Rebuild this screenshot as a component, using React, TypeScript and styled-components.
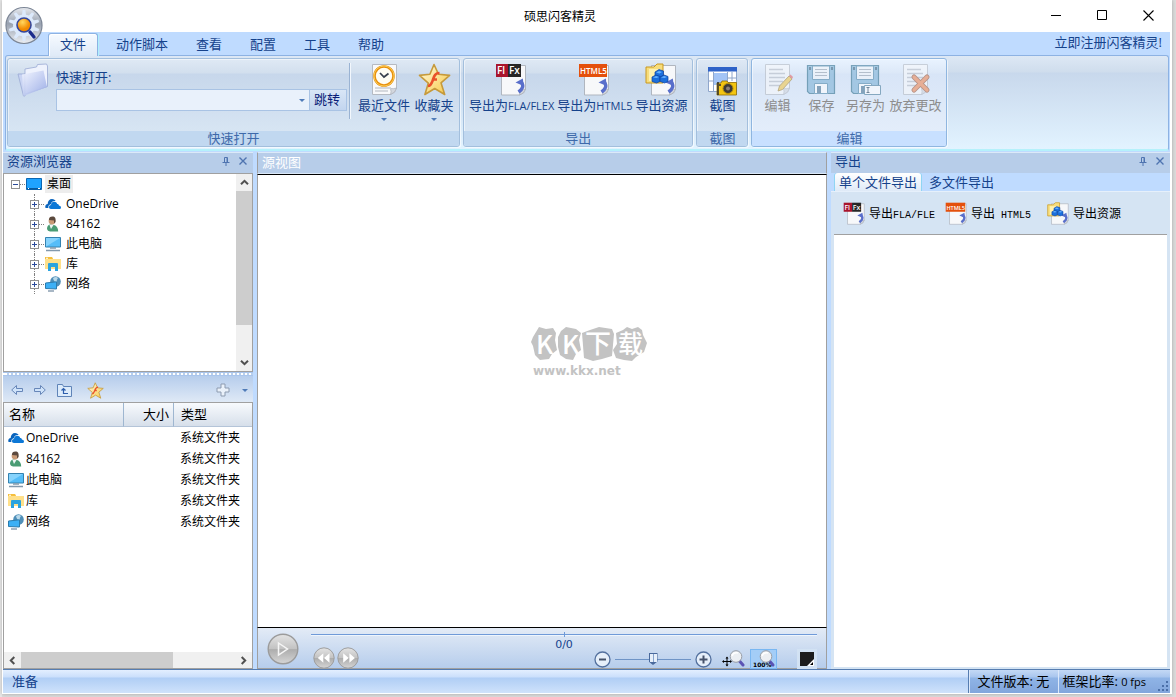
import React, { useState } from "react";
import styled, { createGlobalStyle, css } from "styled-components";

const navy = "#15428b";
const edge = "#a0a0a0";
const frame = "#bfdbff";

const GlobalStyle = createGlobalStyle`
  * { box-sizing: border-box; }
  body { margin: 0; background: #d2d2d2; }
  body, button, input, table {
    font-family: "Open Sans", "Noto Sans CJK SC", sans-serif;
    font-size: 13px;
    line-height: 16px;
  }
  button { border: 0; padding: 0; background: none; color: inherit; }
  svg { display: block; flex: none; }
`;

/* ---------- window frame ---------- */

const Page = styled.div`
  display: flex;
  min-height: 100vh;
  padding: 0 4px 3px 2px;
  background: linear-gradient(90deg, #e8e8e8 0 2px, #dcdcdc 2px);
`;

const Window = styled.div`
  position: relative;
  flex: 1;
  min-width: 0;
  display: flex;
  flex-direction: column;
  border: 1px solid #fff;
  border-width: 0 2px 1px 1px;
  background: ${frame};
  box-shadow: 0 0 4px rgba(0, 0, 0, 0.25);
`;

const TitleBar = styled.header`
  display: flex;
  height: 32px;
  margin-right: -1px;
  background: #fff;
`;

const Title = styled.h1`
  flex: 1;
  margin: 0;
  padding-left: 84px;
  font-size: 12px;
  font-weight: 400;
  line-height: 34px;
  text-align: center;
`;

const CaptionButton = styled.button`
  width: 46px;
  height: 30px;
  display: grid;
  place-items: center;
`;

const AppButton = styled.button`
  position: absolute;
  left: 2px;
  top: 6px;
  z-index: 2;
`;

const Watermark = styled.div`
  position: absolute;
  inset: 0;
  z-index: 1;
  display: grid;
  place-items: center;
  padding: 14px 0 0 6px;
  pointer-events: none;
`;

/* ---------- ribbon ---------- */

const TabStrip = styled.nav`
  display: flex;
  align-items: flex-end;
  gap: 4px;
  height: 23px;
  padding: 0 8px 0 45px;
`;

const Tab = styled.button<{ $active?: boolean }>`
  position: relative;
  height: 22px;
  padding: 0 11px 1px;
  border: 1px solid transparent;
  color: ${navy};
  ${(p) =>
    p.$active &&
    css`
      height: 23px;
      margin: 0 2px -1px 0;
      padding-bottom: 2px;
      border-color: #8db2e3;
      border-bottom: 0;
      border-radius: 3px 3px 0 0;
      background: linear-gradient(#f6faff, #dfeaf7);
      box-shadow: inset 1px 1px 0 #fff, 1px 0 0 #aef0fb;
    `}
`;

const RegisterLink = styled.a`
  align-self: flex-start;
  margin-left: auto;
  padding-top: 2px;
  color: ${navy};
  text-decoration: none;
`;

const RibbonBody = styled.div`
  display: flex;
  gap: 3px;
  margin: 0 1px 1px 2px;
  padding: 2px 1px;
  border: 1px solid #8db2e3;
  border-bottom: 2px solid #b5f1fb;
  border-radius: 3px;
  background: linear-gradient(#dde8f5 0, #cfdded 16px, #c8d8ec 17px, #e2f3ff 100%);
`;

const Group = styled.section<{ $hot?: boolean }>`
  display: flex;
  flex-direction: column;
  height: 89px;
  border: 1px solid ${(p) => (p.$hot ? "#8fb6e0" : "#a3bfdd")};
  border-radius: 3px;
  overflow: hidden;
  box-shadow: inset 1px 1px 0 rgba(255, 255, 255, 0.5), 1px 1px 0 rgba(255, 255, 255, 0.6);
  background: ${(p) =>
    p.$hot
      ? "linear-gradient(#e9f3ff 0, #dce8f8 14px, #d8e5f7 15px, #e3edfa 72px)"
      : "linear-gradient(#dfe9f5 0, #d2dfee 14px, #c7d7eb 15px, #d7e5f3 72px)"};
`;

const GroupBody = styled.div<{ $tight?: boolean }>`
  flex: 1;
  display: flex;
  gap: ${(p) => (p.$tight ? 3 : 4)}px;
  padding: 4px 5px 0;
`;

const GroupTitle = styled.h2<{ $hot?: boolean }>`
  margin: 0;
  height: 15px;
  font-size: 13px;
  font-weight: 400;
  line-height: 14px;
  text-align: center;
  color: #3e6aaa;
  background: ${(p) => (p.$hot ? "#c8e0ff" : "#c1d8f0")};
`;

const RibbonButton = styled.button`
  display: flex;
  flex-direction: column;
  align-items: center;
  min-width: 40px;
  height: 66px;
  color: ${navy};
  white-space: nowrap;
  &:disabled { color: #8d8d8d; }
  &:disabled svg { opacity: 0.6; }
`;

const RibbonLabel = styled.span`
  margin: 1px 0 5px;
`;

const Small = styled.span`
  font-size: 11px;
`;

const Caret = styled.i`
  width: 0;
  border: 3px solid transparent;
  border-top-color: #4f7bb8;
  border-bottom: 0;
`;

const QuickOpen = styled.div`
  width: 294px;
  height: 56px;
  margin: 0 4px 0 3px;
  padding-top: 6px;
  border-right: 1px solid #9ab3d3;
  box-shadow: 1px 0 0 #f2f7fd;
  color: ${navy};
  & > label { display: block; margin-bottom: 4px; }
`;

const QuickRow = styled.div`
  display: flex;
  height: 22px;
  margin-right: 2px;
  border: 1px solid #a9c3e4;
  background: #e9f1fb;
  & > input { flex: 1; min-width: 0; border: 0; background: none; outline: none; }
`;

const ComboArrow = styled.button`
  width: 14px;
  display: grid;
  place-items: center;
`;

const GoButton = styled.button`
  width: 37px;
  padding: 0 2px 2px 0;
  border-left: 1px solid #a9c3e4;
  color: #0a1d78;
  background: linear-gradient(#d9e6f6, #c2d5ef);
`;

const FolderSlot = styled.div`
  padding-left: 4px;
`;

/* ---------- docked panels ---------- */

const Workspace = styled.main`
  flex: 1;
  display: grid;
  grid-template-columns: 250px minmax(0, 1fr) 339px;
  gap: 4px;
`;

const Panel = styled.section`
  display: flex;
  flex-direction: column;
  min-width: 0;
`;

const PanelHeader = styled.div<{ $pale?: boolean }>`
  display: flex;
  align-items: center;
  gap: 9px;
  height: 21px;
  padding: 0 6px 4px 4px;
  border-top: 1px solid #dce9f8;
  background: #b7cde9;
  color: ${(p) => (p.$pale ? "#fff" : navy)};
  & > h2 { flex: 1; margin: 0; font-size: 13px; font-weight: 400; }
  ${(p) =>
    p.$pale &&
    css`
      height: 22px;
      padding-bottom: 3px;
      border: 1px solid ${edge};
      border-top-color: #dce9f8;
      border-bottom-color: #dce9f8;
    `}
`;

const TreeBox = styled.div`
  display: flex;
  height: 199px;
  border: 1px solid ${edge};
  background: #fff;
`;

const Tree = styled.ul`
  flex: 1;
  margin: 0;
  padding: 0 0 0 7px;
  list-style: none;
  font-size: 12px;
  & ul { margin: 0; padding: 0 0 0 19px; list-style: none; }
  & ul > li { position: relative; }
  & ul > li::before {
    content: "";
    position: absolute;
    left: 4px;
    top: 0;
    bottom: 0;
    border-left: 1px dotted #808080;
  }
`;

const TreeRow = styled.div`
  position: relative;
  display: flex;
  align-items: center;
  height: 20px;
`;

const Expander = styled.button`
  width: 9px;
  height: 9px;
  border: 1px solid #919191;
  background: #fff;
  display: grid;
  place-items: center;
`;

const Twig = styled.i`
  width: 5px;
  margin-right: 1px;
  border-top: 1px dotted #808080;
`;

const TreeLabel = styled.span<{ $selected?: boolean }>`
  margin-left: 3px;
  padding: 1px 2px;
  background: ${(p) => (p.$selected ? "#ededed" : "none")};
`;

const Bar = styled.div<{ $vertical?: boolean }>`
  display: flex;
  flex: none;
  flex-direction: ${(p) => (p.$vertical ? "column" : "row")};
  ${(p) => (p.$vertical ? "width: 16px;" : "height: 16px;")}
  background: #f0f0f0;
  & > button { flex: 0 0 17px; display: grid; place-items: center; }
  & > div { flex: 1; }
`;

const Thumb = styled.div<{ $vertical?: boolean; $size: number }>`
  background: #cdcdcd;
  ${(p) => (p.$vertical ? `height: ${p.$size}%;` : `width: ${p.$size}%; height: 100%;`)}
`;

const Splitter = styled.div`
  height: 4px;
  background: repeating-linear-gradient(90deg, #fff 0 2px, #b9cfec 2px 4px) 2px 1px / auto 2px repeat-x #a9c5ec;
`;

const ListTools = styled.div`
  display: flex;
  align-items: center;
  height: 26px;
  padding: 2px 5px 0 8px;
  gap: 12px;
  background: linear-gradient(#b6cdec, #dfe9f6);
`;

const NavTools = styled.div`
  flex: 1;
  display: flex;
  align-items: center;
  gap: 11px;
`;

const StarButton = styled.button`
  padding-left: 4px;
`;

const ListBox = styled.div`
  flex: 1;
  display: flex;
  flex-direction: column;
  justify-content: space-between;
  border: 1px solid ${edge};
  background: #fff;
`;

const FileTable = styled.table`
  width: 100%;
  table-layout: fixed;
  border-collapse: separate;
  border-spacing: 0;
  font-size: 12px;
  th {
    height: 24px;
    padding: 0 5px 2px;
    border-right: 1px solid #9eb6d0;
    border-bottom: 1px solid #b4c4d8;
    background: linear-gradient(#f8fafd, #d6dfea);
    font-size: 13px;
    font-weight: 400;
    text-align: left;
  }
  th:nth-child(1) { width: 120px; }
  th:nth-child(2) { width: 50px; text-align: right; padding-right: 4px; }
  th:nth-child(3) { padding-left: 7px; border-right: 0; }
  td { height: 21px; padding: 0 6px 0 4px; }
  td:nth-child(3) { padding-left: 6px; }
`;

const FileName = styled.span`
  display: flex;
  align-items: center;
  gap: 2px;
`;

const Stage = styled.div`
  flex: 1;
  min-height: 400px;
  border: 1px solid #000;
  border-left-color: ${edge};
  border-right-color: ${edge};
  background: #fff;
`;

/* ---------- player ---------- */

const Player = styled.div`
  display: flex;
  align-items: flex-start;
  gap: 12px;
  height: 41px;
  padding: 5px 9px 0;
  border: 1px solid ${edge};
  border-top: 0;
  background: linear-gradient(#e3ebf6, #b6cdec);
`;

const Transport = styled.div`
  flex: 1;
  min-width: 0;
  padding-top: 1px;
`;

const Timeline = styled.div`
  height: 2px;
  border-top: 1px solid #6f9ad8;
  background: #eef5fd;
`;

const Deck = styled.div`
  display: grid;
  grid-template-columns: 1fr auto 1fr;
  height: 32px;
`;

const Seek = styled.div`
  display: flex;
  align-items: flex-end;
  gap: 2px;
  padding-left: 2px;
`;

const FrameCount = styled.output`
  position: relative;
  font-family: "DejaVu Sans", sans-serif;
  font-size: 11px;
  line-height: 18px;
  color: ${navy};
  &::before {
    content: "";
    position: absolute;
    left: 50%;
    top: -4px;
    height: 5px;
    border-left: 1px solid #6f9ad8;
  }
`;

const ViewTools = styled.div`
  display: flex;
  align-items: center;
  justify-content: flex-end;
  padding-top: 13px;
`;

const ZoomRange = styled.input`
  appearance: none;
  width: 76px;
  height: 16px;
  margin: 0 4px;
  background: linear-gradient(#6f94c6, #6f94c6) center / 100% 1px no-repeat;
  &::-webkit-slider-thumb {
    appearance: none;
    width: 9px;
    height: 12px;
    clip-path: polygon(0 0, 100% 0, 100% 70%, 50% 100%, 0 70%);
    background: linear-gradient(90deg, #e6effa 40%, #86a2cc 40% 60%, #e6effa 60%) center 1px / 7px 8px no-repeat #49699c;
  }
`;

const ToolPair = styled.div`
  display: flex;
  gap: 3px;
  margin: 0 20px 0 8px;
`;

const ToolButton = styled.button<{ $on?: boolean }>`
  display: grid;
  place-items: center;
  width: 27px;
  height: 20px;
  border: 1px solid ${(p) => (p.$on ? "#79b7f2" : "transparent")};
  background: ${(p) => (p.$on ? "#a3cdf7" : "none")};
`;

const Swatch = styled.button`
  display: grid;
  place-items: center;
  width: 20px;
  height: 20px;
  background: #d2e2f3;
`;

/* ---------- export panel ---------- */

const ExportTabs = styled.div`
  display: flex;
  align-items: flex-end;
  height: 19px;
  gap: 4px;
  padding-left: 4px;
  border-bottom: 1px solid #e6f0fb;
`;

const ExportTab = styled.button<{ $active?: boolean }>`
  height: 18px;
  padding: 0 4px;
  border-radius: 3px 3px 0 0;
  color: ${navy};
  ${(p) =>
    p.$active &&
    css`
      background: linear-gradient(#fff, #dfeaf7);
      box-shadow: -1px 0 0 #8fd5f3, 1px 0 0 #8fd5f3;
    `}
`;

const ExportBody = styled.div`
  flex: 1;
  display: flex;
  flex-direction: column;
  padding: 0 3px 2px;
  background: #d5e4f3;
`;

const ExportTools = styled.div`
  display: grid;
  grid-template-columns: 102px 102px auto;
  justify-content: start;
  align-items: center;
  height: 42px;
  padding: 1px 0 0 9px;
`;

const ExportButton = styled.button`
  display: flex;
  align-items: center;
  gap: 3px;
  font-size: 12px;
  white-space: nowrap;
`;

const Mono = styled.span`
  font-family: "Liberation Mono", monospace;
  font-size: 10px;
  line-height: 12px;
`;

const ExportList = styled.div`
  flex: 1;
  border-top: 1px solid ${edge};
  background: #fff;
`;

/* ---------- status bar ---------- */

const StatusBar = styled.footer`
  display: flex;
  height: 24px;
  border-top: 1px solid #567db1;
  color: ${navy};
  line-height: 22px;
  background: linear-gradient(#e3efff 0, #cbdffb 7px, #b0cef5 8px, #cfe2fb 100%);
`;

const Ready = styled.span`
  flex: 1;
  padding-left: 9px;
`;

const StatusInfo = styled.div`
  display: flex;
  border-left: 1px solid #567db1;
  color: #000;
  background: linear-gradient(#c4d9f5 0, #a9c6ee 7px, #8fb4e6 8px, #82a6dc 100%);
`;

const StatusCell = styled.span`
  padding: 0 9px 0 8px;
  border-left: 1px solid #dbe8fa;
  & + & { padding: 0 10px 0 3px; }
`;

/* ---------- icons ---------- */

const LogoIcon = () => (
  <svg width="38" height="40" viewBox="0 0 38 40">
    <defs>
      <linearGradient id="orb" x1="0" y1="0" x2="0" y2="1">
        <stop offset="0" stopColor="#e6e9ee" />
        <stop offset=".45" stopColor="#98a1b0" />
        <stop offset="1" stopColor="#eceff3" />
      </linearGradient>
      <radialGradient id="sun" cx=".4" cy=".3">
        <stop offset="0" stopColor="#ffd860" />
        <stop offset="1" stopColor="#f28a00" />
      </radialGradient>
    </defs>
    <circle cx="19" cy="19.500" r="18" fill="url(#orb)" stroke="#7c8696" strokeWidth="1.200" />
    <g fill="#dce9fb">
      {[0, 36, 72, 108, 144, 180, 216, 252, 288, 324].map((a) => (
        <path key={a} d="M16.800 11 17.600 4h2.800l.8 7z" transform={`rotate(${a} 19 19.500)`} />
      ))}
    </g>
    <circle cx="19" cy="19.500" r="11" fill="#dce9fb" />
    <circle cx="19" cy="19" r="7" fill="url(#sun)" stroke="#34459b" strokeWidth="1.600" />
    <path d="m25 26 4 5" stroke="#1c2c8c" strokeWidth="3.400" strokeLinecap="round" />
  </svg>
);

const BigFolderIcon = () => (
  <svg width="32" height="34" viewBox="0 0 32 34">
    <defs>
      <linearGradient id="fold" x1="0" y1="0" x2="1" y2="1">
        <stop offset="0" stopColor="#f3f6ff" />
        <stop offset="1" stopColor="#93a6e4" />
      </linearGradient>
    </defs>
    <path d="M1 11h7v22H6.500z" fill="#c9d4f3" stroke="#9aa9d4" strokeWidth=".8" />
    <path d="M8 6 19.500 4 20.500 1.500l9-.5 1 2v20.500L8 31z" fill="#eef2fd" stroke="#9aa9d4" strokeWidth=".8" />
    <path d="m5 11.500 21.500-4L30 24 6.500 33z" fill="url(#fold)" fillOpacity=".9" />
  </svg>
);

const Sheet = () => (
  <g>
    <path d="M4.500 1.500h24V25q-1 5-6 6.500h-18z" fill="#f8f9fb" stroke="#b5bac2" />
    <path d="M28.500 25q-3 1-6 .5 1 3 0 6 5-1.500 6-6.500z" fill="#d3d7de" stroke="#a2a8b2" strokeWidth=".6" />
  </g>
);

const RecentIcon = () => (
  <svg width="32" height="33" viewBox="0 0 32 33">
    <Sheet />
    <path d="M7 25h16M7 28h13" stroke="#c9cdd3" strokeWidth="1.500" />
    <circle cx="16" cy="13" r="9.500" fill="#fffdf4" stroke="#e88f0c" strokeWidth="2.600" />
    <circle cx="16" cy="13" r="10" fill="none" stroke="#fbd25d" strokeWidth=".9" />
    <path d="m12 10 4 4 4.500-3.500" fill="none" stroke="#38404e" strokeWidth="1.700" />
  </svg>
);

const StarIcon = ({ size = 33 }: { size?: number }) => (
  <svg width={size} height={size} viewBox="0 0 33 33">
    <defs>
      <linearGradient id="gold" x1="0" y1="0" x2="1" y2="1">
        <stop offset="0" stopColor="#fffbe0" />
        <stop offset="1" stopColor="#f8c845" />
      </linearGradient>
    </defs>
    <path
      d="m16 1.500 4.600 9.800 11 1.100-8.600 7.400 3.700 11.700-10-6-9.800 6 3.400-11.300L1.500 12.400l10.400-1.100z"
      fill="url(#gold)"
      stroke="#c69a3c"
      strokeWidth="1.600"
      strokeLinejoin="round"
    />
    <path d="M21.500 10c-5 0-5.500 4-7 8S12 23 10 23m4-6.500h5" fill="none" stroke="#e9512a" strokeWidth="2.600" />
  </svg>
);

const ExportSheet = ({ children, size }: { children: React.ReactNode; size: number }) => (
  <svg width={size} height={size} viewBox="0 0 33 33">
    <path d="M6.500 2.500h24V26q-1 5-6 6h-18z" fill="#f7f8fa" stroke="#b0b6bf" />
    <path d="M30.500 26q-3 1-6 .4 1 3 0 5.600 5-1.500 6-6z" fill="#d3d7de" stroke="#a2a8b2" strokeWidth=".6" />
    <path d="M23.500 29q7-5 2.600-10" fill="none" stroke="#596fcb" strokeWidth="3.400" />
    <path d="m20.500 19.500 7.300-4 1 7.500z" fill="#596fcb" />
    {children}
  </svg>
);

const IconText = styled.text`
  font-family: "Open Sans", sans-serif;
  font-weight: 600;
  fill: #fff;
`;

const FlaIcon = ({ size = 33 }: { size?: number }) => (
  <ExportSheet size={size}>
    <path d="M1 1h12v13H1z" fill="#a8142c" />
    <path d="M13 1h13v13H13z" fill="#262626" />
    <IconText x="2" y="11" fontSize="10">Fl</IconText>
    <IconText x="14" y="11" fontSize="10">Fx</IconText>
  </ExportSheet>
);

const HtmlIcon = ({ size = 33 }: { size?: number }) => (
  <ExportSheet size={size}>
    <path d="M1 1h28v13H1z" fill="#e4500c" />
    <IconText x="2" y="11" fontSize="8">HTML5</IconText>
  </ExportSheet>
);

const AssetIcon = ({ size = 33 }: { size?: number }) => (
  <ExportSheet size={size}>
    <path d="M1 4h8l3-3h6v19H1z" fill="#f7dd7c" stroke="#c9981f" />
    <path d="M4 6h12v12H4z" fill="#fff1b0" />
    <g fill="#1c6fdc" stroke="#0b3f9c" strokeWidth=".7">
      <path d="m10 9 4-2.500L18.500 8v4.500L15 14.500 10 13z" />
      <path d="m7 14 4-2 4 1.500v5L11.500 20 7 18.500z" />
      <path d="m15 14 4-2 4 1.500v5L19.500 20 15 18.500z" />
    </g>
    <path d="m11 9.500 3-1.500 3 1-2.500 1.500zm-3 5 3-1.500 3 1-2.500 1zm8 0 3-1.500 3 1-2.500 1z" fill="#66b2ff" />
  </ExportSheet>
);

const CaptureIcon = () => (
  <svg width="33" height="33" viewBox="0 0 33 33">
    <path d="M2.500 4.500h28v24h-28z" fill="#fff" stroke="#8fa6cb" />
    <path d="M2 4h29v4.500H2z" fill="#2e62c8" />
    <path d="M8 10h13v12H8z" fill="#a3c4f6" />
    <path d="M7.500 9v19M21.500 9v13M26 9v9M3 18h4.500M21.500 15h9" stroke="#8fa6cb" />
    <path d="M11 20h4l1-2h5l1 1.500h8.500V32H11z" fill="#f3c511" stroke="#8b6a08" strokeWidth=".8" />
    <circle cx="22" cy="25.500" r="5" fill="#3d3a38" stroke="#b68f0b" />
    <circle cx="22" cy="25.500" r="2" fill="#8a8079" />
    <path d="M12 19v13M13 22h2" stroke="#2b2b2b" strokeWidth="1.500" />
  </svg>
);

const Lines = () => <path d="M8 6.500h14M8 10.500h16M8 14.500h16M8 18.500h14M8 22.500h14" stroke="#b9bec6" strokeWidth="1.400" />;

const EditIcon = () => (
  <svg width="32" height="33" viewBox="0 0 32 33">
    <Sheet />
    <Lines />
    <path d="m17 28 1.500-5L28 13l3 3-9.500 10.500z" fill="#f3c94e" stroke="#97772c" strokeWidth=".8" />
    <path d="m28 13 1.500-1.500 2.500 2.500-1 2z" fill="#e46a6a" />
  </svg>
);

const Floppy = () => (
  <g>
    <path d="M2.500 2.500h27v28h-25l-2-2z" fill="#7fb3d6" stroke="#32718f" strokeWidth="1.200" />
    <path d="M7.500 3h17v13.500h-17z" fill="#f5f8fb" stroke="#4d86a8" />
    <path d="M10 6.500h12M10 9.500h12M10 12.500h12" stroke="#9aa5b0" />
    <path d="M9.500 20.500h13v10h-13z" fill="#fff" stroke="#4d86a8" />
    <path d="M12 23h4v7h-4z" fill="#4b7594" />
    <path d="M4 4h2v3H4zm22 0h2v3h-2z" fill="#37617c" />
  </g>
);

const SaveIcon = () => (
  <svg width="32" height="33" viewBox="0 0 32 33">
    <Floppy />
  </svg>
);

const SaveAsIcon = () => (
  <svg width="32" height="33" viewBox="0 0 32 33">
    <Floppy />
    <path d="M15.500 22.500h16v9h-16z" fill="#fff" stroke="#4d7f9c" />
    <path d="M17.500 24.500h3m-3 5h3m-1.500-5v5" stroke="#2f4a5e" />
  </svg>
);

const DiscardIcon = () => (
  <svg width="32" height="33" viewBox="0 0 32 33">
    <Sheet />
    <Lines />
    <path d="m15 14 13 13M28 14 15 27" stroke="#9c5a3c" strokeWidth="5" strokeLinecap="round" />
    <path d="m15 14 13 13M28 14 15 27" stroke="#f08a56" strokeWidth="3.200" strokeLinecap="round" />
  </svg>
);

const DesktopIcon = () => (
  <svg width="16" height="16" viewBox="0 0 16 16">
    <path d="M.5 2.500h15v11H.5z" fill="#1fa3ff" stroke="#0b67b3" />
    <path d="M1 12h14v1.500H1z" fill="#085a9e" />
    <path d="M2 12.500h1m9 0h2" stroke="#fff" />
  </svg>
);

const CloudIcon = () => (
  <svg width="16" height="16" viewBox="0 0 16 16">
    <path d="M.3 11.500c-.3-2 .8-3.300 2.400-3.400C2.700 5 4.500 3 7 3c2 0 3 1 3.600 2-2.600-.3-4.500 1-4.800 3.200C3.900 8.400 3 10 3.400 12H2C1 12 .4 12 .3 11.500z" fill="#0a64bd" />
    <path d="M6 13c-1.400 0-2-1-2-2 0-1.200.8-2 2-2 .1-2 1.400-3.200 3.200-3.200 1.500 0 2.600.9 3 2.200 1 0 1.800.6 1.800 1.700 1.200 0 2 .7 2 1.700S15.200 13 14.300 13z" fill="#0d78d6" />
  </svg>
);

const UserIcon = () => (
  <svg width="16" height="16" viewBox="0 0 16 16">
    <path d="M2 13q0-4 3-4.500l4 .5q4 1 4.200 6.500H5Q2.500 15 2 13z" fill="#4a9c74" />
    <path d="m4.500 9 1.500 4L8.500 9z" fill="#eef4f4" />
    <circle cx="7" cy="5" r="3.400" fill="#c99a76" />
    <path d="M4 4C4 1.500 5 .5 7.500.5S11 2 10.500 6L9 7.500V4.500z" fill="#5b493e" />
  </svg>
);

const ComputerIcon = () => (
  <svg width="16" height="16" viewBox="0 0 16 16">
    <path d="M.5 1.500h15v9.500H.5z" fill="#55bdf8" stroke="#3482b0" />
    <path d="M1 2h14L1 10.500z" fill="#86d3fc" />
    <path d="M5 12h6M1 14.500h14" stroke="#8399ac" strokeWidth="1.400" />
  </svg>
);

const LibraryIcon = () => (
  <svg width="16" height="16" viewBox="0 0 16 16">
    <path d="M0 1h7l1 2h8v10H0z" fill="#ffe08a" />
    <path d="M0 1h7l1 2H0z" fill="#f5bf3d" />
    <path d="M1 1.700h2v1H1z" fill="#fff" />
    <path d="M3 15V8q0-1 1-1h8q1 0 1 1v7h-3v-4H6v4z" fill="#2aa3df" />
  </svg>
);

const NetworkIcon = () => (
  <svg width="16" height="16" viewBox="0 0 16 16">
    <circle cx="10.500" cy="5.500" r="5.300" fill="#4f8fb8" />
    <path d="M8 2q3-2 5 0-2 2-1 4-3 1-4-4z" fill="#b9d9ea" />
    <path d="M.5 7 11.500 5.800V13L.5 12.500z" fill="#3cb0f6" stroke="#2c7cad" />
    <path d="M3 15h6" stroke="#8399ac" strokeWidth="1.400" />
  </svg>
);

const Chevron = ({ turn }: { turn: number }) => (
  <svg width="9" height="9" viewBox="0 0 9 9">
    <path d="m1 6.300 3.500-3.500L8 6.300" fill="none" stroke="#505050" strokeWidth="2" transform={`rotate(${turn} 4.500 4.500)`} />
  </svg>
);

const PinIcon = () => (
  <svg width="8" height="9" viewBox="0 0 8 9">
    <path d="M2.500.5h3v5h-3zM.5 5.500h7M4 5.500V9M5 1v4" fill="none" stroke="#4f74b0" />
  </svg>
);

const CloseIcon = () => (
  <svg width="8" height="8" viewBox="0 0 8 8">
    <path d="m.5.5 7 7m0-7-7 7" stroke="#4f74b0" strokeWidth="1.400" />
  </svg>
);

const ArrowIcon = ({ flip }: { flip?: boolean }) => (
  <svg width="12" height="12" viewBox="0 0 12 12">
    <path
      d="M.7 6 5.500 1.500v3h6v3h-6v3z"
      fill="#cfe3fa"
      stroke="#6786b8"
      transform={flip ? "rotate(180 6 6)" : undefined}
    />
  </svg>
);

const UpFolderIcon = () => (
  <svg width="15" height="14" viewBox="0 0 15 14">
    <path d="M.5 1.500h5l1 2h8v10H.5z" fill="#dcebfb" stroke="#5f84b8" />
    <path d="M11 10.500H6.500V6M4.500 7.500l2-2 2 2" fill="none" stroke="#2c5dad" strokeWidth="1.200" />
  </svg>
);

const AddIcon = () => (
  <svg width="14" height="14" viewBox="0 0 14 14">
    <path d="M5 1h4v4h4v4H9v4H5V9H1V5h4z" fill="#eaf1fa" stroke="#8d9bb0" />
  </svg>
);

const Disc = ({ size, children }: { size: number; children: React.ReactNode }) => (
  <svg width={size} height={size} viewBox="0 0 32 32">
    <defs>
      <linearGradient id="disc" x1="0" y1="0" x2="0" y2="1">
        <stop offset="0" stopColor="#e4e4e4" />
        <stop offset=".5" stopColor="#c2c2c2" />
        <stop offset=".52" stopColor="#adadad" />
        <stop offset="1" stopColor="#d6d6d6" />
      </linearGradient>
    </defs>
    <circle cx="16" cy="16" r="14.800" fill="url(#disc)" stroke="#9b9b9b" strokeWidth="1.400" />
    {children}
  </svg>
);

const ZoomDisc = ({ plus }: { plus?: boolean }) => (
  <svg width="17" height="17" viewBox="0 0 17 17">
    <circle cx="8.500" cy="8.500" r="7.500" fill="#e6effa" stroke="#53709e" strokeWidth="1.300" />
    <path d={plus ? "M4.500 8.500h8m-4-4v8" : "M5 8.500h7"} stroke="#46526a" strokeWidth="2" />
  </svg>
);

const Lens = () => (
  <g>
    <path d="m17.500 11 3.500 4" stroke="#5b53b4" strokeWidth="3" strokeLinecap="round" />
    <circle cx="14" cy="6.500" r="5.800" fill="#eceff3" stroke="#989da5" />
    <path d="M10 6q1-4 6-3" fill="none" stroke="#fff" strokeWidth="1.500" />
  </g>
);

const PanIcon = () => (
  <svg width="23" height="18" viewBox="0 0 23 18">
    <Lens />
    <path d="M1 11.500h8M5 7.500v8" stroke="#000" />
    <path d="m0 11.500 2-1.500v3zm10 0L8 10v3zM5 6.500 3.500 8.500h3zm0 10-1.500-2h3z" />
  </svg>
);

const ActualIcon = () => (
  <svg width="24" height="18" viewBox="0 0 24 18">
    <Lens />
    <text x="1" y="17" fontSize="6" fontFamily="DejaVu Sans, sans-serif" fontWeight="700">100%</text>
  </svg>
);

const SwatchIcon = () => (
  <svg width="14" height="14" viewBox="0 0 14 14">
    <path d="M0 0h14v14H0z" fill="#1c1c1c" />
    <path d="m14 7-7 7h7z" fill="#fff" />
    <path d="M13 10v3h-3z" />
  </svg>
);

const WatermarkArt = () => (
  <svg width="118" height="58" viewBox="0 0 118 58">
    <g fill="#c3c3c3">
      <path d="m2 12 3-5 3-5 7 2 7-1 3 5-1 7 2 10-5 4-3 5-9 1-5-5-2-9-2-4z" />
      <path d="m27 12 3-6 5-4 10 2 5 4-2 7 2 10-5 4-3 6-7-1-6-4-2-8z" />
      <path d="m51 8 8-3 9-3 13 2 2 5-2 22-10 3-9 2-9-3z" />
      <path d="m85 8 7-3 4-3 5 2 6-2 4 3 1 5 4 8-3 9-8 5-4 4-8-1-8-2-3-8 4-6z" />
    </g>
    <g fill="#fff" fontFamily="Noto Sans CJK SC, sans-serif" fontWeight="500">
      <text x="5" y="29" fontSize="26">K</text>
      <text x="31" y="29" fontSize="26">K</text>
      <text x="54" y="28" fontSize="26">下</text>
      <text x="87" y="28" fontSize="25">载</text>
    </g>
    <text x="2" y="50" fill="#c3c3c3" fontFamily="DejaVu Sans, sans-serif" fontWeight="700" fontSize="12">
      www.kkx.net
    </text>
  </svg>
);

/* ---------- data ---------- */

const tabs = ["文件", "动作脚本", "查看", "配置", "工具", "帮助"];

const places = [
  { name: "OneDrive", icon: <CloudIcon /> },
  { name: "84162", icon: <UserIcon /> },
  { name: "此电脑", icon: <ComputerIcon /> },
  { name: "库", icon: <LibraryIcon /> },
  { name: "网络", icon: <NetworkIcon /> },
];

const Command = ({
  icon,
  children,
  menu,
  disabled,
}: {
  icon: React.ReactNode;
  children: React.ReactNode;
  menu?: boolean;
  disabled?: boolean;
}) => (
  <RibbonButton disabled={disabled}>
    {icon}
    <RibbonLabel>{children}</RibbonLabel>
    {menu && <Caret />}
  </RibbonButton>
);

const PlusMinus = ({ open }: { open?: boolean }) => (
  <svg width="7" height="7" viewBox="0 0 7 7">
    <path d={open ? "M1 3.500h5" : "M1 3.500h5M3.500 1v5"} stroke="#2b4b9b" />
  </svg>
);

const PanelTools = () => (
  <>
    <button aria-label="自动隐藏"><PinIcon /></button>
    <button aria-label="关闭面板"><CloseIcon /></button>
  </>
);

export default function App() {
  const [tab, setTab] = useState("文件");
  const [zoom, setZoom] = useState(50);

  return (
    <Page>
      <GlobalStyle />
      <Window>
        <AppButton aria-label="菜单"><LogoIcon /></AppButton>
        <TitleBar>
          <Title>硕思闪客精灵</Title>
          <CaptionButton aria-label="最小化">
            <svg width="11" height="11"><path d="M0 5.500h10" stroke="#000" /></svg>
          </CaptionButton>
          <CaptionButton aria-label="最大化">
            <svg width="11" height="11"><path d="M.5.5h9v9h-9z" fill="none" stroke="#000" /></svg>
          </CaptionButton>
          <CaptionButton aria-label="关闭">
            <svg width="11" height="11"><path d="m.5.500 10 10m0-10-10 10" stroke="#000" strokeWidth="1.100" /></svg>
          </CaptionButton>
        </TitleBar>

        <TabStrip>
          {tabs.map((t) => (
            <Tab key={t} $active={t === tab} onClick={() => setTab(t)}>{t}</Tab>
          ))}
          <RegisterLink href="#register">立即注册闪客精灵!</RegisterLink>
        </TabStrip>

        <RibbonBody>
          <Group>
            <GroupBody>
              <FolderSlot><BigFolderIcon /></FolderSlot>
              <QuickOpen>
                <label htmlFor="quick">快速打开:</label>
                <QuickRow>
                  <input id="quick" type="text" />
                  <ComboArrow aria-label="历史"><Caret /></ComboArrow>
                  <GoButton>跳转</GoButton>
                </QuickRow>
              </QuickOpen>
              <Command icon={<RecentIcon />} menu>最近文件</Command>
              <Command icon={<StarIcon />} menu>收藏夹</Command>
            </GroupBody>
            <GroupTitle>快速打开</GroupTitle>
          </Group>
          <Group>
            <GroupBody $tight>
              <Command icon={<FlaIcon />}>导出为<Small>FLA/FLEX</Small></Command>
              <Command icon={<HtmlIcon />}>导出为<Small>HTML5</Small></Command>
              <Command icon={<AssetIcon />}>导出资源</Command>
            </GroupBody>
            <GroupTitle>导出</GroupTitle>
          </Group>
          <Group>
            <GroupBody>
              <Command icon={<CaptureIcon />} menu>截图</Command>
            </GroupBody>
            <GroupTitle>截图</GroupTitle>
          </Group>
          <Group $hot>
            <GroupBody>
              <Command icon={<EditIcon />} disabled>编辑</Command>
              <Command icon={<SaveIcon />} disabled>保存</Command>
              <Command icon={<SaveAsIcon />} disabled>另存为</Command>
              <Command icon={<DiscardIcon />} disabled>放弃更改</Command>
            </GroupBody>
            <GroupTitle $hot>编辑</GroupTitle>
          </Group>
        </RibbonBody>

        <Workspace>
          <Panel>
            <PanelHeader><h2>资源浏览器</h2><PanelTools /></PanelHeader>
            <TreeBox>
              <Tree>
                <li>
                  <TreeRow>
                    <Expander aria-label="折叠"><PlusMinus open /></Expander>
                    <Twig />
                    <DesktopIcon />
                    <TreeLabel $selected>桌面</TreeLabel>
                  </TreeRow>
                  <ul>
                    {places.map((p) => (
                      <li key={p.name}>
                        <TreeRow>
                          <Expander aria-label="展开"><PlusMinus /></Expander>
                          <Twig />
                          {p.icon}
                          <TreeLabel>{p.name}</TreeLabel>
                        </TreeRow>
                      </li>
                    ))}
                  </ul>
                </li>
              </Tree>
              <Bar $vertical>
                <button aria-label="向上"><Chevron turn={0} /></button>
                <div><Thumb $vertical $size={82} /></div>
                <button aria-label="向下"><Chevron turn={180} /></button>
              </Bar>
            </TreeBox>
            <Splitter />
            <ListTools>
              <NavTools>
                <button aria-label="后退"><ArrowIcon /></button>
                <button aria-label="前进"><ArrowIcon flip /></button>
                <button aria-label="上一级"><UpFolderIcon /></button>
                <StarButton aria-label="收藏"><StarIcon size={17} /></StarButton>
              </NavTools>
              <button aria-label="添加"><AddIcon /></button>
              <Caret />
            </ListTools>
            <ListBox>
              <FileTable>
                <thead>
                  <tr><th>名称</th><th>大小</th><th>类型</th></tr>
                </thead>
                <tbody>
                  {places.map((p) => (
                    <tr key={p.name}>
                      <td><FileName>{p.icon}{p.name}</FileName></td>
                      <td />
                      <td>系统文件夹</td>
                    </tr>
                  ))}
                </tbody>
              </FileTable>
              <Bar>
                <button aria-label="向左"><Chevron turn={-90} /></button>
                <div><Thumb $size={71} /></div>
                <button aria-label="向右"><Chevron turn={90} /></button>
              </Bar>
            </ListBox>
          </Panel>

          <Panel>
            <PanelHeader $pale><h2>源视图</h2></PanelHeader>
            <Stage />
            <Player>
              <button aria-label="播放">
                <Disc size={32}>
                  <path d="m11.500 10 9 6-9 6z" fill="none" stroke="#f6f6f6" strokeWidth="1.500" />
                </Disc>
              </button>
              <Transport>
                <Timeline />
                <Deck>
                  <Seek>
                    <button aria-label="快退">
                      <Disc size={22}><path d="m15 9-8 7 8 7zm9 0-8 7 8 7z" fill="#fff" /></Disc>
                    </button>
                    <button aria-label="快进">
                      <Disc size={22}><path d="m9 9 8 7-8 7zm9 0 8 7-8 7z" fill="#fff" /></Disc>
                    </button>
                  </Seek>
                  <FrameCount>0/0</FrameCount>
                  <ViewTools>
                    <button aria-label="缩小"><ZoomDisc /></button>
                    <ZoomRange
                      type="range"
                      aria-label="缩放"
                      value={zoom}
                      onChange={(e) => setZoom(Number(e.target.value))}
                    />
                    <button aria-label="放大"><ZoomDisc plus /></button>
                    <ToolPair>
                      <ToolButton aria-label="平移"><PanIcon /></ToolButton>
                      <ToolButton $on aria-label="实际大小"><ActualIcon /></ToolButton>
                    </ToolPair>
                    <Swatch aria-label="背景颜色"><SwatchIcon /></Swatch>
                  </ViewTools>
                </Deck>
              </Transport>
            </Player>
          </Panel>

          <Panel>
            <PanelHeader><h2>导出</h2><PanelTools /></PanelHeader>
            <ExportTabs>
              <ExportTab $active>单个文件导出</ExportTab>
              <ExportTab>多文件导出</ExportTab>
            </ExportTabs>
            <ExportBody>
              <ExportTools>
                <ExportButton><FlaIcon size={23} /><span>导出<Mono>FLA/FLE</Mono></span></ExportButton>
                <ExportButton><HtmlIcon size={23} /><span>导出<Mono> HTML5</Mono></span></ExportButton>
                <ExportButton><AssetIcon size={23} />导出资源</ExportButton>
              </ExportTools>
              <ExportList />
            </ExportBody>
          </Panel>
        </Workspace>

        <StatusBar>
          <Ready>准备</Ready>
          <StatusInfo>
            <StatusCell>文件版本: 无</StatusCell>
            <StatusCell>框架比率: <Small>0 fps</Small></StatusCell>
            <svg width="14" height="22" viewBox="0 0 14 22">
              <path
                d="M10 11h2v2h-2zm-4 4h2v2H6zm4 0h2v2h-2zm-8 4h2v2H2zm4 0h2v2H6zm4 0h2v2h-2z"
                fill="#4a6fa8"
              />
            </svg>
          </StatusInfo>
        </StatusBar>
        <Watermark><WatermarkArt /></Watermark>
      </Window>
    </Page>
  );
}
